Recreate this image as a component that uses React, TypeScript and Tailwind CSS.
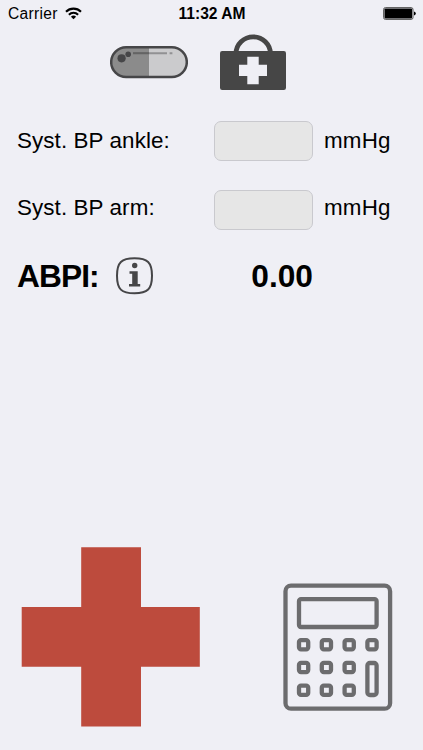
import React, { useState } from 'react';

function StatusBar() {
  return (
    <header className="flex h-7 items-center px-2 text-black">
      <div className="flex w-[170.5px] items-center gap-[7px]">
        <span className="text-[15.6px] leading-7 tracking-[0.3px]">Carrier</span>
        <svg className="mb-0.5 h-[13px] w-[17px]" viewBox="0 0 17 13" fill="none" stroke="currentColor" strokeWidth="2.1">
          <path d="M1 4.7a10.6 10.6 0 0 1 15 0" />
          <path d="M3.9 7.7a6.5 6.5 0 0 1 9.2 0" />
          <path d="M8.5 12.3 5.9 9.7a3.7 3.7 0 0 1 5.2 0z" fill="currentColor" stroke="none" />
        </svg>
      </div>
      <span className="text-[15.6px] font-bold leading-7">11:32 AM</span>
      <svg className="-mr-px mb-0.5 ml-auto h-[13px] w-[33px]" viewBox="0 0 33 13">
        <rect x="0.6" y="0.6" width="29.4" height="11.8" rx="1.8" fill="none" stroke="#555" strokeWidth="1" />
        <rect x="1.5" y="1.5" width="27.6" height="10" rx="0.8" />
        <path d="M31 4.5q1.8.5 1.8 2t-1.8 2z" />
      </svg>
    </header>
  );
}

function PillIcon() {
  return (
    <svg className="mt-[17px] h-[34px] w-[78px]" viewBox="0 0 78 34">
      <path d="M39 2H17a15 15 0 0 0 0 30h22z" fill="#8b8b8b" />
      <path d="M39 2h22a15 15 0 0 1 0 30H39z" fill="#cbcbcd" />
      <rect x="1.2" y="2.2" width="75.6" height="29.8" rx="14.9" fill="none" stroke="#464648" strokeWidth="2.5" />
      <circle cx="11.6" cy="13.3" r="4.1" fill="#464648" />
      <circle cx="18.2" cy="9.3" r="2.8" fill="#464648" />
      <path d="M23 8.2h16" stroke="#646464" strokeWidth="2.1" />
      <path d="M39 8.2h18M59.6 8.2h2.8" stroke="#919193" strokeWidth="2.1" />
    </svg>
  );
}

function MedkitIcon() {
  return (
    <svg className="mt-1.5 h-14 w-[66px]" viewBox="0 0 66 56">
      <path d="M16 22V19.5a17.200 16.700 0 0 1 34.400 0V22" fill="none" stroke="#464646" strokeWidth="4.8" />
      <rect y="17" width="66" height="39" rx="2.2" fill="#464646" />
      <path d="M27.3 22.7h11.4v8h8.3V42h-8.3v8.3H27.3V42H19V30.7h8.3z" fill="#efeff5" />
    </svg>
  );
}

function InfoIcon() {
  return (
    <svg className="ml-px h-[38px] w-[38px]" viewBox="0 0 38 38">
      <path
        d="M18.5 1.3C31.5 1.3 36 5.5 36 18.800S31.500 36.300 18.500 36.300 1 32.300 1 18.800 5.500 1.300 18.500 1.300z"
        fill="none"
        stroke="#464648"
        strokeWidth="2"
      />
      <circle cx="18.700" cy="8.500" r="2.700" fill="#464648" />
      <path d="M13.500 14.200h8.200v12.800h2.500v2.500H13v-2.500h3.200V16.700h-2.700z" fill="#464648" />
    </svg>
  );
}

function CalculatorIcon() {
  const keys = [
    [20.6, 61.7], [43.4, 61.7], [66.2, 61.7], [89, 61.7],
    [20.6, 84.5], [43.4, 84.5], [66.2, 84.5],
    [20.6, 107.3], [43.4, 107.3], [66.2, 107.3],
  ];
  return (
    <svg className="h-32 w-[110px]" viewBox="0 0 110 128" fill="none" stroke="#6c6c6e" strokeWidth="4.3">
      <rect x="2.5" y="2.7" width="104.6" height="123" rx="5.5" />
      <rect x="16" y="16.200" width="77.600" height="27.800" rx="2" />
      {keys.map(([x, y]) => (
        <rect key={`${x}-${y}`} x={x - 4.6} y={y - 4.6} width="9.2" height="9.2" rx="2" />
      ))}
      <rect x="84.4" y="80" width="9.2" height="32" rx="2.5" />
    </svg>
  );
}

interface PressureFieldProps {
  label: string;
  value: string;
  onChange: (value: string) => void;
}

function PressureField({ label, value, onChange }: PressureFieldProps) {
  return (
    <label className="flex items-end text-[22.4px] leading-9 text-black">
      <span className="w-[197px] tracking-[0.1px]">{label}</span>
      <input
        value={value}
        onChange={(e) => onChange(e.target.value)}
        inputMode="decimal"
        className="h-10 w-[99px] rounded-[7px] border border-[#c9c9ce] bg-[#e6e6e6] px-2 outline-none"
      />
      <span className="ml-[11px] tracking-[0.2px]">mmHg</span>
    </label>
  );
}

export default function App() {
  const [ankle, setAnkle] = useState('');
  const [arm, setArm] = useState('');
  const ratio = Number(arm) > 0 ? Number(ankle) / Number(arm) : 0;

  return (
    <main className="flex h-[750px] w-[423px] flex-col overflow-hidden bg-[#efeff5] font-['Liberation_Sans',Arial,sans-serif]">
      <StatusBar />
      <div className="flex h-[93px] items-start gap-8 pl-[110px]">
        <PillIcon />
        <MedkitIcon />
      </div>
      <section className="flex flex-col pl-[17px]">
        <div className="flex flex-col gap-[29px]">
          <div className="flex h-10 flex-col [&_span]:pb-0.5">
            <PressureField label="Syst. BP ankle:" value={ankle} onChange={setAnkle} />
          </div>
          <div className="flex h-10 flex-col [&_span]:pb-1">
            <PressureField label="Syst. BP arm:" value={arm} onChange={setArm} />
          </div>
        </div>
        <div className="mt-[27px] flex h-[38px] items-center text-[31.7px] font-bold leading-[38px] text-black">
          <span className="w-[98px] tracking-[-0.9px]">ABPI:</span>
          <InfoIcon />
          <output className="ml-auto mr-[110px]">{ratio.toFixed(2)}</output>
        </div>
      </section>
      <footer className="mt-auto flex items-start justify-between pb-[23px] pl-[21px] pr-[30px]">
        <svg className="h-[180px] w-[179px]" viewBox="0 0 179 180">
          <path d="M60.2 0.2H120V60h58.8v59.7H120v59.7H60.2v-59.7H.7V60h59.5z" fill="#bd4b3d" />
        </svg>
        <div className="pt-9">
          <CalculatorIcon />
        </div>
      </footer>
    </main>
  );
}
